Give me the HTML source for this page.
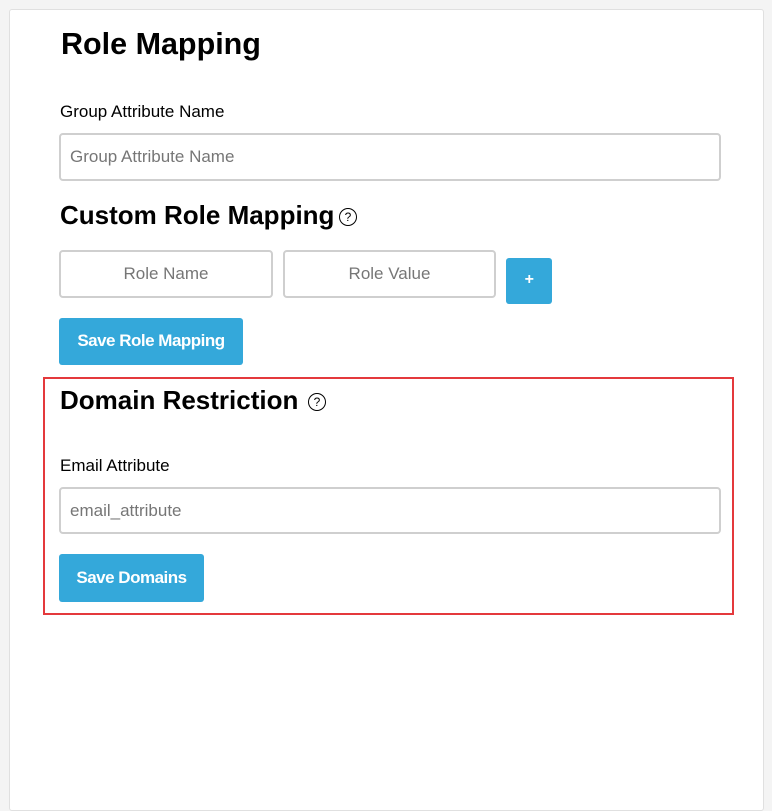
<!DOCTYPE html>
<html><head><style>
body{margin:0;width:772px;height:791px;background:#f4f4f4;font-family:"Liberation Sans",sans-serif;position:relative;overflow:hidden}
.card{position:absolute;left:9px;top:9px;width:753px;height:800px;background:#fff;border:1px solid #e0e0e0;border-radius:3px}
.a{position:absolute}
h1,h2{margin:0;position:absolute;font-weight:bold;color:#000;white-space:nowrap}
.inp{position:absolute;box-sizing:border-box;border:2px solid #cfcfcf;border-radius:4px;background:#fff;color:#767676;font-size:17px;line-height:44px;padding-left:9px}
.btn{position:absolute;background:#34a8da;color:#fff;border-radius:3px;font-weight:bold;font-size:17px;letter-spacing:-0.5px;text-align:center}
.q{position:absolute;width:16px;height:16px;border:1.3px solid #000;border-radius:50%;font-size:12px;line-height:16px;text-align:center;font-weight:normal}
.lbl{position:absolute;font-size:17px;color:#000}
</style></head><body>
<div class="card"></div>
<h1 style="left:61px;top:27px;font-size:30.5px">Role Mapping</h1>
<div class="lbl" style="left:60px;top:102px">Group Attribute Name</div>
<div class="inp" style="left:59px;top:133px;width:662px;height:48px">Group Attribute Name</div>
<h2 style="left:60px;top:200px;font-size:26px">Custom Role Mapping</h2>
<div class="q" style="left:339px;top:208px">?</div>
<div class="inp" style="left:59px;top:250px;width:214px;height:48px;text-align:center;padding:0">Role Name</div>
<div class="inp" style="left:283px;top:250px;width:213px;height:48px;text-align:center;padding:0">Role Value</div>
<div class="btn" style="left:506px;top:258px;width:46px;height:46px;line-height:44px;font-size:16px">+</div>
<div class="btn" style="left:59px;top:318px;width:184px;height:47px;line-height:46px">Save Role Mapping</div>
<div class="a" style="left:43px;top:377px;width:687px;height:234px;border:2px solid #e4393c"></div>
<h2 style="left:60px;top:385px;font-size:26px">Domain Restriction</h2>
<div class="q" style="left:308px;top:393px">?</div>
<div class="lbl" style="left:60px;top:456px">Email Attribute</div>
<div class="inp" style="left:59px;top:487px;width:662px;height:47px">email_attribute</div>
<div class="btn" style="left:59px;top:554px;width:145px;height:48px;line-height:47px">Save Domains</div>
</body></html>
